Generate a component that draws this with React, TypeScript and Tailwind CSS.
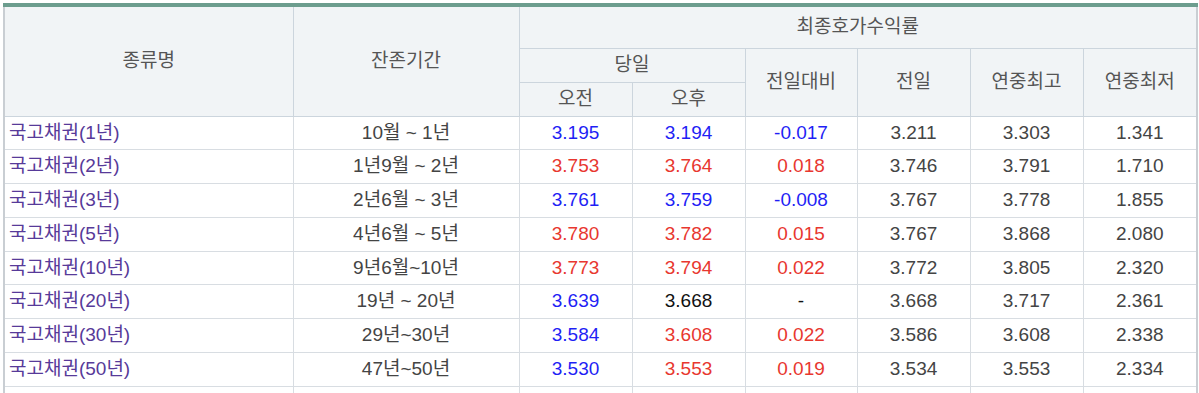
import React from 'react';

type Tone = 'blue' | 'red' | 'black';

interface BondRow {
  name: string;
  period: string;
  am: [string, Tone];
  pm: [string, Tone];
  diff: [string, Tone];
  prev: string;
  high: string;
  low: string;
}

const rows: BondRow[] = [
  { name: '국고채권(1년)', period: '10월 ~ 1년', am: ['3.195', 'blue'], pm: ['3.194', 'blue'], diff: ['-0.017', 'blue'], prev: '3.211', high: '3.303', low: '1.341' },
  { name: '국고채권(2년)', period: '1년9월 ~ 2년', am: ['3.753', 'red'], pm: ['3.764', 'red'], diff: ['0.018', 'red'], prev: '3.746', high: '3.791', low: '1.710' },
  { name: '국고채권(3년)', period: '2년6월 ~ 3년', am: ['3.761', 'blue'], pm: ['3.759', 'blue'], diff: ['-0.008', 'blue'], prev: '3.767', high: '3.778', low: '1.855' },
  { name: '국고채권(5년)', period: '4년6월 ~ 5년', am: ['3.780', 'red'], pm: ['3.782', 'red'], diff: ['0.015', 'red'], prev: '3.767', high: '3.868', low: '2.080' },
  { name: '국고채권(10년)', period: '9년6월~10년', am: ['3.773', 'red'], pm: ['3.794', 'red'], diff: ['0.022', 'red'], prev: '3.772', high: '3.805', low: '2.320' },
  { name: '국고채권(20년)', period: '19년 ~ 20년', am: ['3.639', 'blue'], pm: ['3.668', 'black'], diff: ['-', 'black'], prev: '3.668', high: '3.717', low: '2.361' },
  { name: '국고채권(30년)', period: '29년~30년', am: ['3.584', 'blue'], pm: ['3.608', 'red'], diff: ['0.022', 'red'], prev: '3.586', high: '3.608', low: '2.338' },
  { name: '국고채권(50년)', period: '47년~50년', am: ['3.530', 'blue'], pm: ['3.553', 'red'], diff: ['0.019', 'red'], prev: '3.534', high: '3.553', low: '2.334' },
];

const toneClass: Record<Tone, string> = {
  blue: 'text-[#1f1ff5]',
  red: 'text-[#e8372f]',
  black: 'text-[#111111]',
};

const th = 'border border-[#ccd5dd] font-normal text-[#555555]';
const td = 'border border-[#d8dde2] text-center';

export default function App() {
  return (
    <div className="bg-white pt-[3px] pl-[3px] font-['Liberation_Sans','Noto_Sans_CJK_KR',sans-serif] text-[19px]">
      <table className="w-[1193px] table-fixed border-collapse border-t-4 border-t-[#6c9d8e] border-x-2 border-x-[#c9ced3]">
        <colgroup>
          <col className="w-[289px]" />
          <col className="w-[226px]" />
          <col className="w-[113px]" />
          <col className="w-[113px]" />
          <col className="w-[112px]" />
          <col className="w-[113px]" />
          <col className="w-[113px]" />
          <col className="w-[114px]" />
        </colgroup>
        <thead className="bg-[#f1f4f6]">
          <tr className="h-[43px]">
            <th rowSpan={3} className={th}>종류명</th>
            <th rowSpan={3} className={th}>잔존기간</th>
            <th colSpan={6} className={th}>최종호가수익률</th>
          </tr>
          <tr className="h-[34px]">
            <th colSpan={2} className={th}>당일</th>
            <th rowSpan={2} className={th}>전일대비</th>
            <th rowSpan={2} className={th}>전일</th>
            <th rowSpan={2} className={th}>연중최고</th>
            <th rowSpan={2} className={th}>연중최저</th>
          </tr>
          <tr className="h-[34px]">
            <th className={th}>오전</th>
            <th className={th}>오후</th>
          </tr>
        </thead>
        <tbody className="text-[#444444]">
          {rows.map((r) => (
            <tr key={r.name} className="h-[33.75px]">
              <td className="border border-[#d8dde2] pl-[4px] text-left text-[#573a99]">{r.name}</td>
              <td className={td}>{r.period}</td>
              <td className={`${td} ${toneClass[r.am[1]]}`}>{r.am[0]}</td>
              <td className={`${td} ${toneClass[r.pm[1]]}`}>{r.pm[0]}</td>
              <td className={`${td} ${toneClass[r.diff[1]]}`}>{r.diff[0]}</td>
              <td className={td}>{r.prev}</td>
              <td className={td}>{r.high}</td>
              <td className={td}>{r.low}</td>
            </tr>
          ))}
          <tr className="h-[33.75px]">
            <td className={td}>&nbsp;</td>
            <td className={td}></td>
            <td className={td}></td>
            <td className={td}></td>
            <td className={td}></td>
            <td className={td}></td>
            <td className={td}></td>
            <td className={td}></td>
          </tr>
        </tbody>
      </table>
    </div>
  );
}
